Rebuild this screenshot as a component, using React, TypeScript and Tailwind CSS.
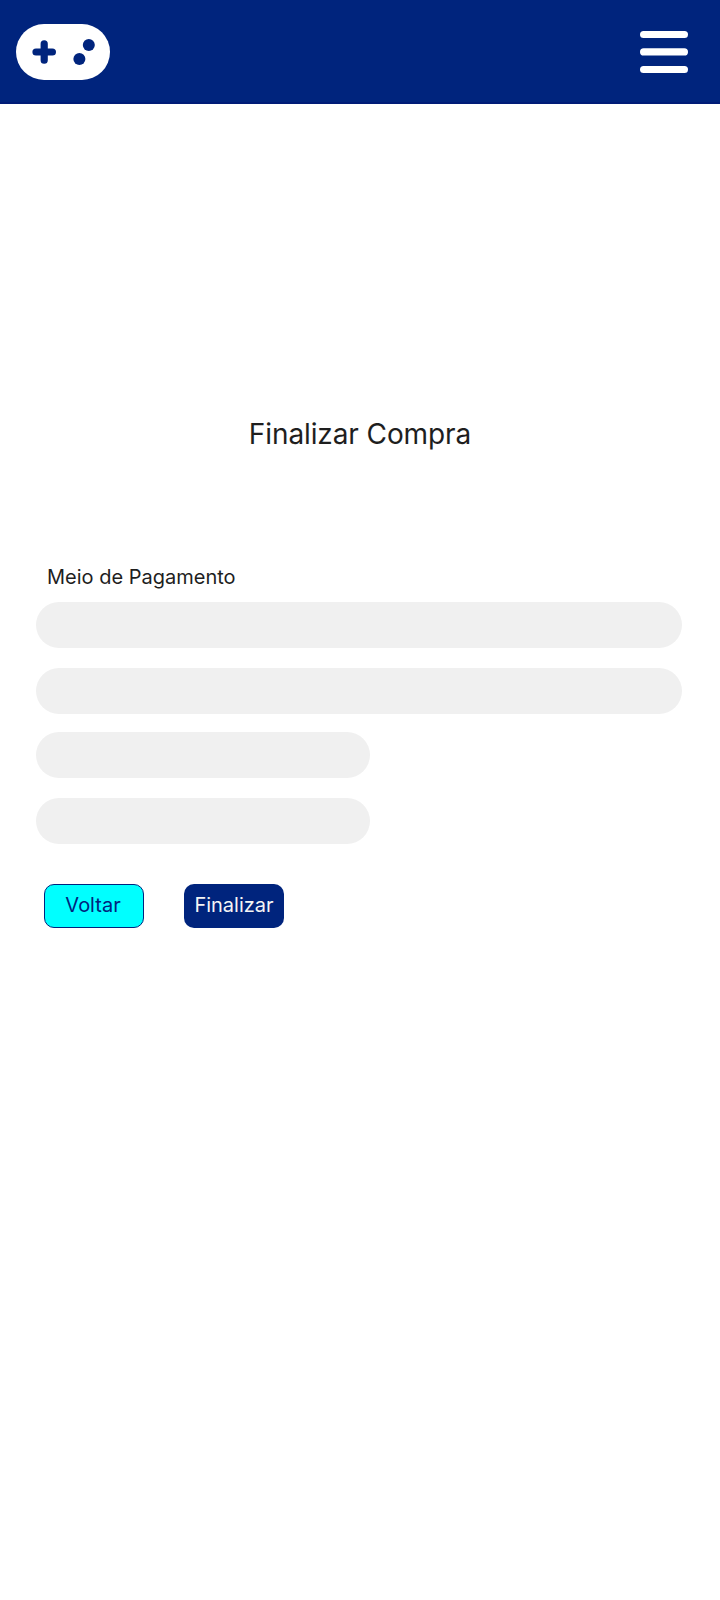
const fields = [
  { id: "card", className: "w-[646px]" },
  { id: "name", className: "mt-5 w-[646px]" },
  { id: "expiry", className: "mt-[18px] w-[334px]" },
  { id: "code", className: "mt-5 w-[334px]" },
];

function Header() {
  return (
    <header className="flex h-[104px] items-center justify-between border-b-2 border-[#001c77] bg-[#00247d] pt-0.5 pr-8 pl-4">
      <svg width="94" height="56" viewBox="0 0 94 56" aria-hidden="true">
        <rect width="94" height="56" rx="28" fill="#fff" />
        <path d="M28.2 19.8v16.4M20 28h16.4" stroke="#00247d" strokeWidth="7.2" strokeLinecap="round" />
        <circle cx="72.8" cy="21" r="6" fill="#00247d" />
        <circle cx="63.4" cy="35" r="6" fill="#00247d" />
      </svg>
      <button type="button" aria-label="Menu">
        <svg className="block" width="48" height="42" viewBox="0 0 48 42">
          <g fill="#fff">
            <rect width="48" height="7" rx="3.5" />
            <rect y="17.2" width="48" height="7.4" rx="3.7" />
            <rect y="35" width="48" height="7" rx="3.5" />
          </g>
        </svg>
      </button>
    </header>
  );
}

export default function App() {
  return (
    <div className="min-h-[1600px] w-[720px] bg-white font-['Inter',sans-serif] text-[#1e1e1e]">
      <Header />
      <main className="flex flex-col pl-9">
        <h1 className="mt-[312px] mr-9 h-9 text-center text-[28px] leading-9 tracking-[-0.1px]">Finalizar Compra</h1>
        <form className="mt-[113px] flex flex-col" onSubmit={(e) => e.preventDefault()}>
          <h2 className="mb-[13px] pl-[11px] text-[20px] leading-6">Meio de Pagamento</h2>
          {fields.map((f) => (
            <input
              key={f.id}
              name={f.id}
              className={"h-[46px] rounded-full bg-[#f0f0f0] px-6 text-[20px] outline-none " + f.className}
            />
          ))}
          <div className="mt-10 flex gap-10 pl-2 text-[20px] leading-6">
            <button type="button" className="h-11 w-[100px] rounded-[10px] border border-[#00247d] bg-[#00ffff] pr-0.5 pb-0.5 text-[#00247d]">
              Voltar
            </button>
            <button type="submit" className="h-11 w-[100px] rounded-[10px] bg-[#00247d] pb-0.5 text-[#f5f5f5]">
              Finalizar
            </button>
          </div>
        </form>
      </main>
    </div>
  );
}
